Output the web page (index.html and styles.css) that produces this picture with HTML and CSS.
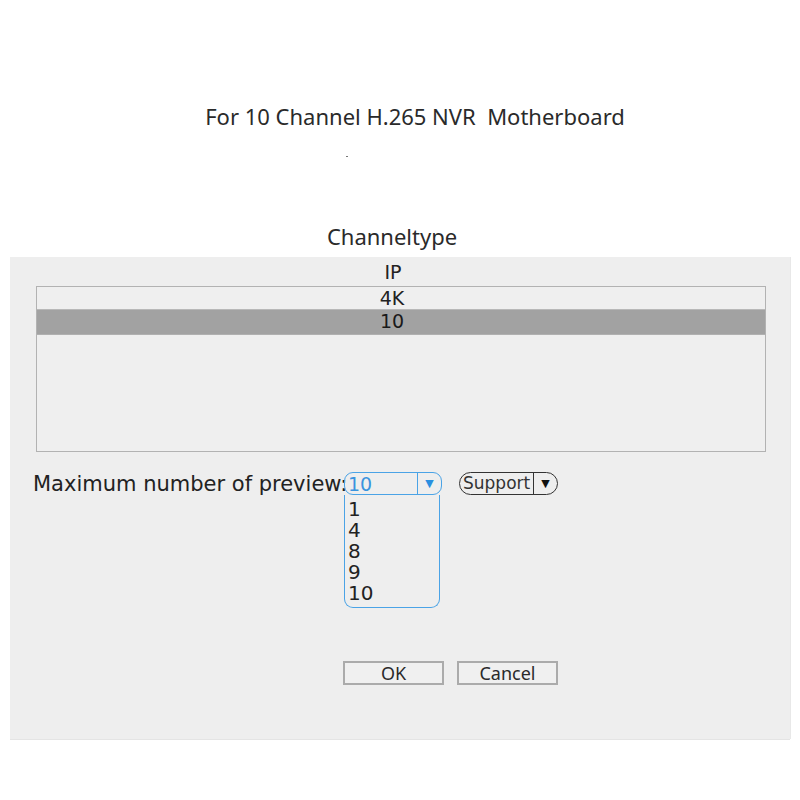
FILE: index.html
```html
<!DOCTYPE html>
<html>
<head>
<meta charset="utf-8">
<link rel="stylesheet" href="styles.css">
</head>
<body>
<div class="page">
  <h1 class="title">For 10 Channel H.265 NVR&nbsp; Motherboard</h1>
  <div class="dot-row"><span class="dot"></span></div>
  <div class="caption">Channeltype</div>
  <div class="panel">
    <div class="ip">IP</div>
    <div class="listbox">
      <div class="row">4K</div>
      <div class="row selected">10</div>
    </div>
    <div class="preview-row">
      <span class="label">Maximum number of preview:</span>
      <div class="combo">
        <div class="combo-head">
          <span class="combo-value">10</span>
          <span class="combo-arrow">▼</span>
        </div>
        <div class="combo-list">
          <div>1</div>
          <div>4</div>
          <div>8</div>
          <div>9</div>
          <div>10</div>
        </div>
      </div>
      <div class="support">
        <span class="support-text">Support</span>
        <span class="support-arrow">▼</span>
      </div>
    </div>
    <div class="buttons">
      <div class="btn">OK</div>
      <div class="btn">Cancel</div>
    </div>
  </div>
</div>
</body>
</html>
```

FILE: styles.css
```css
html, body {
  margin: 0;
  padding: 0;
  background: #ffffff;
}
.page {
  width: 800px;
  height: 800px;
  display: flex;
  flex-direction: column;
  font-family: "DejaVu Sans", sans-serif;
  color: #222;
}
.title {
  margin: 103px 0 0 0;
  font-family: "Noto Sans", sans-serif;
  font-weight: normal;
  font-size: 22px;
  line-height: 26px;
  text-align: center;
  padding-left: 30px;
  color: #2a2a2a;
}
.dot-row {
  height: 50px;
  position: relative;
}
.dot {
  position: absolute;
  left: 346px;
  top: 27px;
  width: 2px;
  height: 1px;
  background: #777;
}
.caption {
  margin-top: 44px;
  margin-left: -16px;
  font-family: "Noto Sans", sans-serif;
  font-size: 22px;
  line-height: 26px;
  text-align: center;
  color: #2a2a2a;
}
.panel {
  margin: 8px 10px 0 10px;
  width: 780px;
  height: 482px;
  background: #eeeeee;
  box-shadow: 0 1px 0 #e4e4e4, 1px 0 0 #e8e8e8;
  display: flex;
  flex-direction: column;
  box-sizing: border-box;
}
.ip {
  height: 29px;
  text-align: center;
  font-size: 19px;
  line-height: 30px;
  padding-right: 14px;
  color: #222;
}
.listbox {
  margin-left: 26px;
  width: 730px;
  height: 166px;
  border: 1.5px solid #b2b2b2;
  box-sizing: border-box;
  background: #efefef;
}
.row {
  height: 22px;
  line-height: 22px;
  text-align: center;
  font-size: 19px;
  color: #222;
  padding-right: 18px;
}
.row:first-child {
  border-bottom: 1px solid #b8b8b8;
}
.row.selected {
  background: #a2a2a2;
  height: 24px;
  border-bottom: 1px solid #b0b0b0;
  color: #1a1a1a;
}
.preview-row {
  margin-top: 20px;
  margin-left: 23px;
  display: flex;
  align-items: flex-start;
  height: 140px;
}
.label {
  font-size: 21px;
  line-height: 24px;
  color: #222;
  width: 311px;
  white-space: nowrap;
}
.combo {
  width: 98px;
  display: flex;
  flex-direction: column;
}
.combo-head {
  height: 23px;
  border: 1.5px solid #4aa3e6;
  border-radius: 9px;
  box-sizing: border-box;
  display: flex;
  align-items: stretch;
}
.combo-value {
  width: 73px;
  border-right: 1.5px solid #4aa3e6;
  color: #3a94de;
  font-size: 19px;
  line-height: 22px;
  padding-left: 3px;
  box-sizing: border-box;
}
.combo-arrow {
  flex: 1;
  text-align: center;
  color: #2a8fe0;
  font-size: 11px;
  line-height: 21px;
}
.combo-list {
  width: 96px;
  height: 113px;
  border: 1.5px solid #4aa3e6;
  border-top: none;
  border-radius: 0 0 9px 9px;
  box-sizing: border-box;
  padding-left: 3px;
  padding-top: 4px;
  font-size: 20px;
  line-height: 21px;
  color: #222;
}
.support {
  margin-left: 17px;
  width: 99px;
  height: 23px;
  border: 1.5px solid #333;
  border-radius: 12px;
  box-sizing: border-box;
  display: flex;
  align-items: stretch;
}
.support-text {
  width: 74px;
  border-right: 1.5px solid #333;
  font-size: 17px;
  line-height: 20px;
  padding-left: 3px;
  box-sizing: border-box;
  color: #333;
}
.support-arrow {
  flex: 1;
  text-align: center;
  font-size: 11px;
  line-height: 21px;
  color: #111;
}
.buttons {
  margin-top: 49px;
  margin-left: 333px;
  display: flex;
  gap: 13px;
}
.btn {
  width: 101px;
  height: 24px;
  border: 2px solid #ababab;
  box-sizing: border-box;
  background: #f0f0f0;
  text-align: center;
  font-family: "Noto Sans", sans-serif;
  font-size: 18px;
  line-height: 20px;
  color: #2a2a2a;
}
```
